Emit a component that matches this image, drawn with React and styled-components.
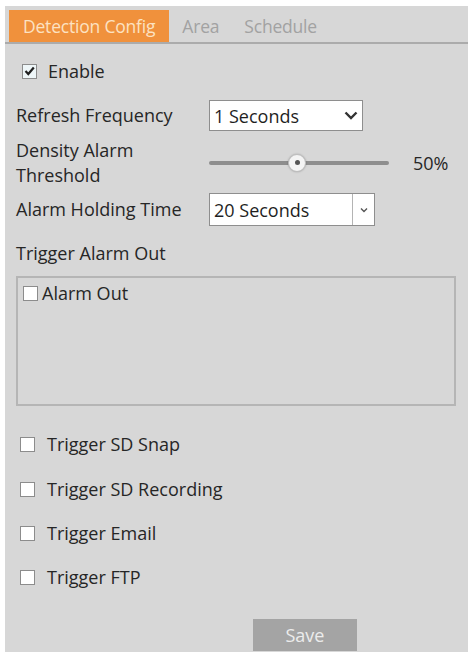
import React from 'react'
import styled, { createGlobalStyle } from 'styled-components'

const GlobalStyle = createGlobalStyle`
  body {
    margin: 0;
    background: #ffffff;
    font-family: "Open Sans", "Noto Sans", sans-serif;
  }
`

const Panel = styled.div`
  margin: 6px 0 0 5px;
  width: 463px;
  height: 646px;
  background: #d7d7d7;
  display: flex;
  flex-direction: column;
`

const TabBar = styled.div`
  display: flex;
  align-items: flex-end;
  height: 36px;
  padding-left: 4px;
  border-bottom: 2px solid #ababab;
`

const Tab = styled.div`
  height: 32px;
  display: flex;
  align-items: center;
  padding: 0 ${p => (p.active ? '14px' : '0')};
  margin-left: ${p => (p.active ? '0' : p.gap + 'px')};
  background: ${p => (p.active ? '#f0913c' : 'transparent')};
  color: ${p => (p.active ? '#fce2c2' : '#a2a2a2')};
  font-size: 17.5px;
  letter-spacing: -0.2px;
`

const Content = styled.div`
  display: flex;
  flex-direction: column;
  padding-left: 11px;
  color: #262626;
  font-size: 18px;
`

const Row = styled.div`
  display: flex;
  align-items: center;
  height: ${p => p.h}px;
  margin-top: ${p => p.mt}px;
`

const Label = styled.div`
  width: 193px;
  flex-shrink: 0;
  line-height: 25px;
`

const CheckBox = styled.span`
  display: inline-flex;
  align-items: center;
  justify-content: center;
  box-sizing: border-box;
  width: 15px;
  height: 15px;
  margin-left: ${p => p.ml || 0}px;
  margin-right: ${p => p.mr || 12}px;
  background: ${p => (p.checked ? '#eef6f8' : '#ffffff')};
  border: 1px solid #8c8c8c;
`

const Select = styled.div`
  box-sizing: border-box;
  display: flex;
  align-items: center;
  width: ${p => p.w}px;
  height: ${p => p.h}px;
  background: #ffffff;
  border: 1px solid #8e8e8e;
  padding-left: 4px;
  color: #1f1f1f;
`

const SelectText = styled.span`
  flex: 1;
`

const Chevron = styled.span`
  display: flex;
  width: 22px;
  justify-content: center;
`

const DropButton = styled.span`
  display: flex;
  align-items: center;
  justify-content: center;
  width: 21px;
  height: 100%;
  border-left: 1px solid #b4b4b4;
`

const Slider = styled.div`
  position: relative;
  width: 180px;
  height: 4px;
  background: #8e8e8e;
  border-radius: 2px;
`

const Knob = styled.div`
  position: absolute;
  top: -7px;
  box-sizing: border-box;
  width: 18px;
  height: 18px;
  margin-left: -9px;
  border-radius: 50%;
  background: #f4f4f4;
  border: 1px solid #bdbdbd;
  box-shadow: 0 0 2px rgba(0, 0, 0, 0.25);
  display: flex;
  align-items: center;
  justify-content: center;

  &::after {
    content: '';
    width: 5px;
    height: 5px;
    border-radius: 50%;
    background: #555;
  }
`

const Percent = styled.span`
  margin-left: 24px;
`

const OutBox = styled.div`
  box-sizing: border-box;
  margin-top: 11px;
  width: 440px;
  height: 130px;
  border: 2px solid #b5b5b5;
  padding: 4px 0 0 5px;
`

const OutItem = styled.div`
  display: flex;
  align-items: center;
  height: 22px;
`

const SaveButton = styled.button`
  align-self: flex-start;
  margin: 27px 0 0 237px;
  width: 104px;
  height: 32px;
  border: none;
  background: #a4a4a4;
  color: #ececec;
  font-family: "Open Sans", "Noto Sans", sans-serif;
  font-size: 18px;
`

const BigChevron = () => (
  <svg width="14" height="9" viewBox="0 0 14 9">
    <path d="M1.5 1.5 L7 7 L12.5 1.5" fill="none" stroke="#333" strokeWidth="2.4" />
  </svg>
)

const SmallChevron = () => (
  <svg width="8" height="6" viewBox="0 0 8 6">
    <path d="M1 1.5 L4 4.5 L7 1.5" fill="none" stroke="#555" strokeWidth="1.4" />
  </svg>
)

const Tick = () => (
  <svg width="11" height="10" viewBox="0 0 11 10">
    <path d="M1.5 5 L4.3 8 L9.8 1.5" fill="none" stroke="#1f1f1f" strokeWidth="2.2" />
  </svg>
)

const triggers = [
  { label: 'Trigger SD Snap', mt: 23 },
  { label: 'Trigger SD Recording', mt: 15 },
  { label: 'Trigger Email', mt: 14 },
  { label: 'Trigger FTP', mt: 14 }
]

const App = () => {
  const threshold = 50

  return (
    <>
      <GlobalStyle />
      <Panel>
        <TabBar>
          <Tab active>Detection Config</Tab>
          <Tab gap={13}>Area</Tab>
          <Tab gap={25}>Schedule</Tab>
        </TabBar>
        <Content>
          <Row h={28} mt={13}>
            <CheckBox checked ml={6} mr={11}><Tick /></CheckBox>
            Enable
          </Row>
          <Row h={31} mt={15}>
            <Label>Refresh Frequency</Label>
            <Select w={154} h={31}>
              <SelectText>1 Seconds</SelectText>
              <Chevron><BigChevron /></Chevron>
            </Select>
          </Row>
          <Row h={51} mt={6}>
            <Label>Density Alarm<br />Threshold</Label>
            <Slider>
              <Knob style={{ left: `${threshold * 0.98}%` }} />
            </Slider>
            <Percent>{threshold}%</Percent>
          </Row>
          <Row h={33} mt={5}>
            <Label>Alarm Holding Time</Label>
            <Select w={166} h={33}>
              <SelectText>20 Seconds</SelectText>
              <DropButton><SmallChevron /></DropButton>
            </Select>
          </Row>
          <Row h={24} mt={15}>Trigger Alarm Out</Row>
          <OutBox>
            <OutItem>
              <CheckBox mr={4} />
              Alarm Out
            </OutItem>
          </OutBox>
          {triggers.map(t => (
            <Row key={t.label} h={30} mt={t.mt}>
              <CheckBox ml={4} mr={12} />
              {t.label}
            </Row>
          ))}
          <SaveButton>Save</SaveButton>
        </Content>
      </Panel>
    </>
  )
}

export default App
